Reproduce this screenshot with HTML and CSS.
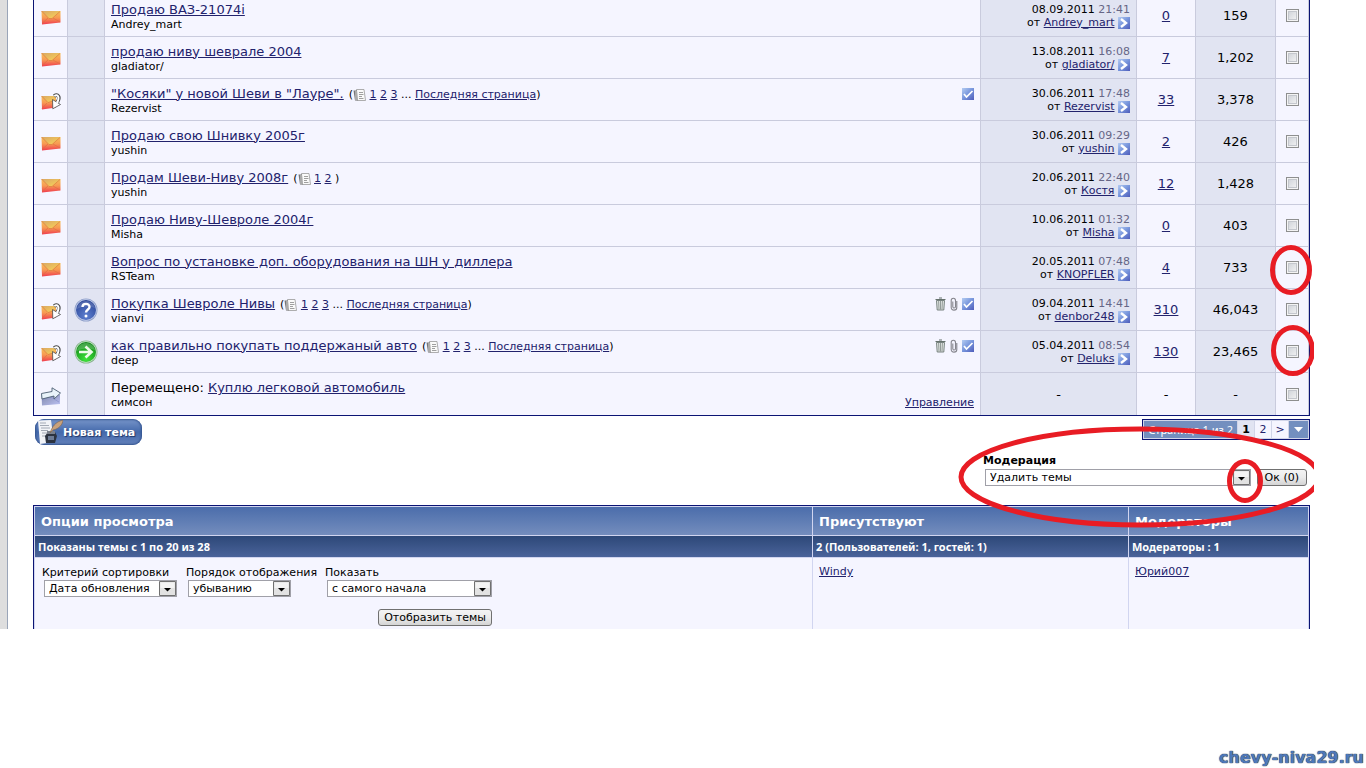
FILE: index.html
```html
<!DOCTYPE html>
<html lang="ru">
<head>
<meta charset="utf-8">
<title>Продажа и покупка - форум</title>
<link rel="stylesheet" href="styles.css">
</head>
<body>
<svg class="defs" aria-hidden="true">
  <defs>
    <linearGradient id="gMail" x1="0" y1="0" x2="0" y2="1"><stop offset="0" stop-color="#f6c25a"/><stop offset=".5" stop-color="#f79a52"/><stop offset="1" stop-color="#f03c50"/></linearGradient>
    <linearGradient id="gFlap" x1="0" y1="0" x2="1" y2="1"><stop offset="0" stop-color="#d9a765"/><stop offset="1" stop-color="#fbd557"/></linearGradient>
    <linearGradient id="gBlue" x1="0" y1="0" x2="1" y2="1"><stop offset="0" stop-color="#b4ccf2"/><stop offset=".5" stop-color="#7795dc"/><stop offset="1" stop-color="#4e5cba"/></linearGradient>
    <radialGradient id="gAsk" cx=".5" cy=".8" r=".8"><stop offset="0" stop-color="#5c7fd0"/><stop offset="1" stop-color="#2b4596"/></radialGradient>
    <radialGradient id="gGo" cx=".5" cy=".85" r=".8"><stop offset="0" stop-color="#3ee43a"/><stop offset="1" stop-color="#128a1a"/></radialGradient>
    <linearGradient id="gMove" x1="0" y1="0" x2="1" y2="1"><stop offset="0" stop-color="#7f86a8"/><stop offset="1" stop-color="#bcc2f4"/></linearGradient>
  </defs>
  <symbol id="mail" viewBox="0 0 20 15">
    <path d="M.5 1 19.500 1V12.500L1 14.500z" fill="url(#gMail)"/>
    <path d="M.5 1 19.500 1 11 8.500 8 8.500z" fill="url(#gFlap)"/>
    <path d="M.5 1 8 8.500 11 8.500 19 1.500M1 13.500 7 8M19 12 12 8" fill="none" stroke="#d8703c" stroke-width=".6"/>
  </symbol>
  <symbol id="mailhot" viewBox="0 0 20 17">
    <path d="M.5 3 15 3V14.500L1 16.500z" fill="url(#gMail)"/>
    <path d="M.5 3 15 3 12 8 7 9.500z" fill="url(#gFlap)"/>
    <path d="M.5 3 7 9.500 12 8M1 15.500 6 10" fill="none" stroke="#d8703c" stroke-width=".6"/>
    <path d="M13 3C17 .5 19.500 4 16.500 9" fill="none" stroke="#4a4a4a" stroke-width="3.600"/>
    <path d="M11.500 6.500 19.500 11.500 11.800 15.800z" fill="#fff" stroke="#4a4a4a" stroke-width=".8"/>
    <path d="M13.300 3C17 .8 19 4 16 10" fill="none" stroke="#fff" stroke-width="2"/>
  </symbol>
  <symbol id="moved" viewBox="0 0 20 19">
    <path d="M.5 7 19 7.500V17L1 18.500z" fill="url(#gMove)"/>
    <path d="M1 14 8 9l10 6" fill="none" stroke="#8d94cc" stroke-width=".8"/>
    <path d="M.5 6.500 11 4.500V.8L19.500 6 13 12V9L1 12z" fill="#e9f3fa" stroke="#4b5c70" stroke-width=".9"/>
  </symbol>
  <symbol id="ask" viewBox="0 0 24 24">
    <circle cx="12" cy="12" r="11.500" fill="#8f9fc9"/><circle cx="12" cy="12" r="10.700" fill="#c2cdea"/><circle cx="12" cy="12" r="10" fill="url(#gAsk)"/>
    <path d="M3 11C4 5 8 3 12 3s8 2 9 7C15 8 9 8 3 11z" fill="#fff" opacity=".15"/>
    <path d="M8.500 9C8.500 5 15.500 4.800 15.500 9 15.500 11.500 12 11.500 12 14.500" fill="none" stroke="#fff" stroke-width="2.400"/><circle cx="12" cy="18" r="1.500" fill="#fff"/>
  </symbol>
  <symbol id="go" viewBox="0 0 24 24">
    <circle cx="12" cy="12" r="11.500" fill="#87b58d"/><circle cx="12" cy="12" r="10.700" fill="#c4e3c6"/><circle cx="12" cy="12" r="10" fill="url(#gGo)"/>
    <path d="M3 11C4 5 8 3 12 3s8 2 9 7C15 8 9 8 3 11z" fill="#fff" opacity=".2"/>
    <path d="M5 12H17M11.500 6.500 17.500 12 11.500 17.500" fill="none" stroke="#eefbe9" stroke-width="2.600"/>
  </symbol>
  <symbol id="pages" viewBox="0 0 13 12">
    <path d="M3.500.5H11L12.500 11.500H4z" fill="#fafafa" stroke="#999" stroke-width=".8"/>
    <path d="M.5 1.500H4L4.500 11.500H2z" fill="#777"/><path d="M3 2V11" stroke="#ddd"/>
    <path d="M6 3.500H10M6 5.500H10.500M6 7.500H9M6 9.500H10.500" stroke="#888" stroke-width=".8"/>
  </symbol>
  <symbol id="last" viewBox="0 0 12 12">
    <path d="M0 0H12V12H0z" fill="url(#gBlue)"/><path d="M3 2 8 6 3 10" fill="none" stroke="#fff" stroke-width="2.400"/>
  </symbol>
  <symbol id="tick" viewBox="0 0 12 12">
    <path d="M0 0H12V12H0z" fill="url(#gBlue)"/><path d="M2 6 4.500 9 10.500 3" fill="none" stroke="#fff" stroke-width="1.700"/>
  </symbol>
  <symbol id="clip" viewBox="0 0 8 14">
    <path d="M6.800 4V10.500C6.800 14 1.200 14 1.200 10.500V3.500C1.200.5 5.500.5 5.500 3.500V9.500C5.500 11.500 2.800 11.500 2.800 9.500V4.500" fill="none" stroke="#85858d" stroke-width="1.100"/>
  </symbol>
  <symbol id="bin" viewBox="0 0 11 14">
    <path d="M1.500 3.500H9.500L8.800 13H2.200z" fill="#e2e6e4" stroke="#6b7773" stroke-width=".9"/>
    <path d="M.5 2.500H10.500M4 1H7" stroke="#65716c"/><path d="M3.600 4 4 12.500M5.500 4V12.500M7.400 4 7 12.500" stroke="#7d8884" stroke-width=".8" fill="none"/>
  </symbol>
  <symbol id="drop" viewBox="0 0 17 15">
    <path d="M.5.5H16.500V14.500H.5z" fill="#e2e2e2" stroke="#707070"/><path d="M1.500 1.500H15.500V7H1.500z" fill="#f3f3f3"/><path d="M5 7H12L8.500 10.500z" fill="#000"/>
  </symbol>
</svg>

<div class="shot">
  <main class="page">
    <table class="threads">
      <colgroup><col class="c-status"><col class="c-icon"><col><col class="c-last"><col class="c-replies"><col class="c-views"><col class="c-check"></colgroup>
      <tbody>
      <tr>
        <td><svg class="i-mail"><use href="#mail"/></svg></td><td class="alt"></td>
        <td class="topic"><div class="title"><a href="#">Продаю ВАЗ-21074i</a></div><div class="author">Andrey_mart</div></td>
        <td class="alt last">08.09.2011 <time>21:41</time><br>от <a href="#">Andrey_mart</a> <svg class="i-last"><use href="#last"/></svg></td>
        <td><a href="#">0</a></td><td class="alt">159</td><td><input type="checkbox" aria-label="Выбрать тему Продаю ВАЗ-21074i"></td>
      </tr>
      <tr>
        <td><svg class="i-mail"><use href="#mail"/></svg></td><td class="alt"></td>
        <td class="topic"><div class="title"><a href="#">продаю ниву шеврале 2004</a></div><div class="author">gladiator/</div></td>
        <td class="alt last">13.08.2011 <time>16:08</time><br>от <a href="#">gladiator/</a> <svg class="i-last"><use href="#last"/></svg></td>
        <td><a href="#">7</a></td><td class="alt">1,202</td><td><input type="checkbox" aria-label="Выбрать тему продаю ниву шеврале 2004"></td>
      </tr>
      <tr>
        <td><svg class="i-hot"><use href="#mailhot"/></svg></td><td class="alt"></td>
        <td class="topic"><div class="title"><a href="#">"Косяки" у новой Шеви в "Лауре".</a><span class="pages">(<svg class="i-pages"><use href="#pages"/></svg> <a href="#">1</a> <a href="#">2</a> <a href="#">3</a> ... <a href="#">Последняя страница</a>)</span><span class="marks"><svg class="i-last"><use href="#tick"/></svg></span></div><div class="author">Rezervist</div></td>
        <td class="alt last">30.06.2011 <time>17:48</time><br>от <a href="#">Rezervist</a> <svg class="i-last"><use href="#last"/></svg></td>
        <td><a href="#">33</a></td><td class="alt">3,378</td><td><input type="checkbox" aria-label="Выбрать тему Косяки у новой Шеви"></td>
      </tr>
      <tr>
        <td><svg class="i-mail"><use href="#mail"/></svg></td><td class="alt"></td>
        <td class="topic"><div class="title"><a href="#">Продаю свою Шнивку 2005г</a></div><div class="author">yushin</div></td>
        <td class="alt last">30.06.2011 <time>09:29</time><br>от <a href="#">yushin</a> <svg class="i-last"><use href="#last"/></svg></td>
        <td><a href="#">2</a></td><td class="alt">426</td><td><input type="checkbox" aria-label="Выбрать тему Продаю свою Шнивку 2005г"></td>
      </tr>
      <tr>
        <td><svg class="i-mail"><use href="#mail"/></svg></td><td class="alt"></td>
        <td class="topic"><div class="title"><a href="#">Продам Шеви-Ниву 2008г</a><span class="pages">(<svg class="i-pages"><use href="#pages"/></svg> <a href="#">1</a> <a href="#">2</a> )</span></div><div class="author">yushin</div></td>
        <td class="alt last">20.06.2011 <time>22:40</time><br>от <a href="#">Костя</a> <svg class="i-last"><use href="#last"/></svg></td>
        <td><a href="#">12</a></td><td class="alt">1,428</td><td><input type="checkbox" aria-label="Выбрать тему Продам Шеви-Ниву 2008г"></td>
      </tr>
      <tr>
        <td><svg class="i-mail"><use href="#mail"/></svg></td><td class="alt"></td>
        <td class="topic"><div class="title"><a href="#">Продаю Ниву-Шевроле 2004г</a></div><div class="author">Misha</div></td>
        <td class="alt last">10.06.2011 <time>01:32</time><br>от <a href="#">Misha</a> <svg class="i-last"><use href="#last"/></svg></td>
        <td><a href="#">0</a></td><td class="alt">403</td><td><input type="checkbox" aria-label="Выбрать тему Продаю Ниву-Шевроле 2004г"></td>
      </tr>
      <tr>
        <td><svg class="i-mail"><use href="#mail"/></svg></td><td class="alt"></td>
        <td class="topic"><div class="title"><a href="#">Вопрос по установке доп. оборудования на ШН у диллера</a></div><div class="author">RSTeam</div></td>
        <td class="alt last">20.05.2011 <time>07:48</time><br>от <a href="#">KNOPFLER</a> <svg class="i-last"><use href="#last"/></svg></td>
        <td><a href="#">4</a></td><td class="alt">733</td><td><input type="checkbox" aria-label="Выбрать тему Вопрос по установке"></td>
      </tr>
      <tr>
        <td><svg class="i-hot"><use href="#mailhot"/></svg></td><td class="alt"><svg class="i-round"><use href="#ask"/></svg></td>
        <td class="topic"><div class="title"><a href="#">Покупка Шевроле Нивы</a><span class="pages">(<svg class="i-pages"><use href="#pages"/></svg> <a href="#">1</a> <a href="#">2</a> <a href="#">3</a> ... <a href="#">Последняя страница</a>)</span><span class="marks"><svg class="i-bin"><use href="#bin"/></svg><svg class="i-clip"><use href="#clip"/></svg><svg class="i-last"><use href="#tick"/></svg></span></div><div class="author">vianvi</div></td>
        <td class="alt last">09.04.2011 <time>14:41</time><br>от <a href="#">denbor248</a> <svg class="i-last"><use href="#last"/></svg></td>
        <td><a href="#">310</a></td><td class="alt">46,043</td><td><input type="checkbox" aria-label="Выбрать тему Покупка Шевроле Нивы"></td>
      </tr>
      <tr>
        <td><svg class="i-hot"><use href="#mailhot"/></svg></td><td class="alt"><svg class="i-round"><use href="#go"/></svg></td>
        <td class="topic"><div class="title"><a href="#">как правильно покупать поддержаный авто</a><span class="pages">(<svg class="i-pages"><use href="#pages"/></svg> <a href="#">1</a> <a href="#">2</a> <a href="#">3</a> ... <a href="#">Последняя страница</a>)</span><span class="marks"><svg class="i-bin"><use href="#bin"/></svg><svg class="i-clip"><use href="#clip"/></svg><svg class="i-last"><use href="#tick"/></svg></span></div><div class="author">deep</div></td>
        <td class="alt last">05.04.2011 <time>08:54</time><br>от <a href="#">Deluks</a> <svg class="i-last"><use href="#last"/></svg></td>
        <td><a href="#">130</a></td><td class="alt">23,465</td><td><input type="checkbox" aria-label="Выбрать тему как правильно покупать"></td>
      </tr>
      <tr>
        <td><svg class="i-moved"><use href="#moved"/></svg></td><td class="alt"></td>
        <td class="topic"><div class="title"><span>Перемещено:</span><a class="after" href="#">Куплю легковой автомобиль</a></div><div class="author"><span>симсон</span><a href="#">Управление</a></div></td>
        <td class="alt">-</td><td>-</td><td class="alt">-</td><td><input type="checkbox" aria-label="Выбрать перемещённую тему"></td>
      </tr>
      </tbody>
    </table>

    <div class="below">
      <a class="newtopic" href="#">
        <svg class="quill" viewBox="0 0 28 26" aria-hidden="true">
          <path d="M3 1.500 16 1 19 23 5 25z" fill="#f1f3f7"/>
          <path d="M5 4H11M5 6.500H14M6 9H15M6 11.500H13M7 14H12M7 17H11" stroke="#9aa1ad" stroke-width=".9"/>
          <path d="M10 17 13 13H20L22 17 20 24H11z" fill="#2c3340"/><path d="M13 17H19V21H13z" fill="#6d7b94"/><path d="M12 12H20V15H12z" fill="#7a808c"/>
          <path d="M15 14C17 8 20 3 28 1 28 5 24 10 18 11z" fill="#c9a27c" stroke="#7c6450" stroke-width=".6"/>
        </svg>
        <span>Новая тема</span>
      </a>
      <nav class="pager">
        <span class="count">Страница 1 из 2</span><b>1</b><a href="#">2</a><a href="#">&gt;</a>
        <button type="button" aria-label="Перейти к странице"><svg viewBox="0 0 9 6"><path d="M0 0H9L4.500 5z" fill="#fff"/></svg></button>
      </nav>
    </div>

    <form class="moderation">
      <label for="act">Модерация</label>
      <div class="line">
        <span class="pick wide"><select id="act"><option>Удалить темы</option></select><svg viewBox="0 0 17 15"><use href="#drop"/></svg></span>
        <button type="button" class="btn ok">Ок (0)</button>
      </div>
    </form>

    <table class="options">
      <colgroup><col><col class="o-present"><col class="o-mods"></colgroup>
      <thead>
        <tr><th>Опции просмотра</th><th>Присутствуют</th><th>Модераторы</th></tr>
        <tr class="sub"><th>Показаны темы с 1 по 20 из 28</th><th>2 (Пользователей: 1, гостей: 1)</th><th>Модераторы : 1</th></tr>
      </thead>
      <tbody><tr>
        <td>
          <form class="sort">
            <div class="fields">
              <div class="f-by"><label for="by">Критерий сортировки</label><span class="pick"><select id="by"><option>Дата обновления</option></select><svg viewBox="0 0 17 15"><use href="#drop"/></svg></span></div>
              <div class="f-order"><label for="ord">Порядок отображения</label><span class="pick"><select id="ord"><option>убыванию</option></select><svg viewBox="0 0 17 15"><use href="#drop"/></svg></span></div>
              <div class="f-from"><label for="from">Показать</label><span class="pick"><select id="from"><option>с самого начала</option></select><svg viewBox="0 0 17 15"><use href="#drop"/></svg></span></div>
            </div>
            <button type="button" class="btn">Отобразить темы</button>
          </form>
        </td>
        <td><a href="#">Windy</a></td>
        <td><a href="#">Юрий007</a></td>
      </tr></tbody>
    </table>
  </main>
  <svg class="rings" viewBox="954 0 360 630" aria-hidden="true">
    <g fill="none" stroke="#e81c24" stroke-width="5">
      <ellipse cx="1291" cy="270" rx="18.500" ry="22.500"/>
      <ellipse cx="1293" cy="350.500" rx="19.500" ry="23"/>
      <ellipse cx="1245" cy="481" rx="15.500" ry="19.500"/>
      <ellipse cx="1140" cy="477" rx="179" ry="48"/>
    </g>
  </svg>
</div>
<footer class="site">chevy-niva29.ru</footer>
</body>
</html>
```
FILE: styles.css
```css
* { box-sizing: border-box; }

body {
  margin: 0;
  min-height: 100vh;
  display: flex;
  flex-direction: column;
  background: #fff;
  color: #000;
  font: 11px/13px "DejaVu Sans", Verdana, sans-serif;
}

a { color: #22226c; }
svg { display: inline-block; vertical-align: middle; }
.defs { position: absolute; width: 0; height: 0; }

.shot {
  position: relative;
  overflow: hidden;
  margin-right: 52px;
  border-left: 7px solid #dedede;
}
.page {
  border-left: 1px solid #9aa5b8;
  padding: 0 4px 0 25px;
}
.rings {
  position: absolute;
  top: 0;
  right: 0;
  width: 360px;
  height: 630px;
  pointer-events: none;
}

/* thread list */
.threads {
  width: 100%;
  margin-top: -6px;
  table-layout: fixed;
  border-collapse: separate;
  border-spacing: 0;
  border: 1px solid #0b1474;
}
.c-status { width: 34px; }
.c-icon { width: 37px; }
.c-last { width: 156px; }
.c-replies { width: 59px; }
.c-views { width: 80px; }
.c-check { width: 33px; }

.threads td {
  height: 42px;
  padding: 0 6px;
  background: #f5f5ff;
  border-right: 1px solid #c9cbdd;
  border-bottom: 1px solid #c9cbdd;
  text-align: center;
  font-size: 13px;
}
.threads tr:last-child td { border-bottom: 0; }
.threads .alt { background: #e1e4f2; }
.threads .topic { padding-top: 2px; text-align: left; }
.threads td:nth-child(2), .threads td:last-child { padding: 0; }
.threads td:first-child { padding: 4px 0 0; }
.threads .last { text-align: right; font-size: 11px; }
.last time { color: #666686; }

.title { display: flex; line-height: 16px; }
.after { margin-left: 4px; }
.pages { margin-left: 5px; font-size: 11px; line-height: 17px; height: 16px; }
.author { display: flex; justify-content: space-between; font-size: 11px; line-height: 14px; }
.marks { display: flex; align-items: center; gap: 4px; margin-left: auto; }

.i-mail { width: 20px; height: 15px; }
.i-hot { width: 20px; height: 17px; }
.i-moved { width: 20px; height: 19px; }
.i-round { width: 24px; height: 24px; }
.i-pages { width: 13px; height: 12px; }
.i-last { width: 12px; height: 12px; }
.i-clip { width: 8px; height: 14px; }
.i-bin { width: 11px; height: 14px; }

input[type="checkbox"] {
  appearance: none;
  display: block;
  width: 13px;
  height: 13px;
  margin: 0 auto;
  border: 1px solid #8e8f8f;
  background: linear-gradient(135deg, #cbcfd5, #f6f6f6);
  box-shadow: inset 0 0 0 1px #f4f4f4, inset 0 0 0 2px #c4c7cd;
}

/* button and pager under the list */
.below {
  display: flex;
  justify-content: space-between;
  align-items: flex-start;
  padding: 3px 0 0 2px;
}
.newtopic {
  display: flex;
  align-items: center;
  width: 107px;
  height: 26px;
  border-radius: 9px;
  background: linear-gradient(#7896ca, #4469ab 50%, #6482bb);
  box-shadow: inset 0 0 2px 1px #34548f;
  color: #fff;
  font: bold 11px/13px "DejaVu Sans", Verdana, sans-serif;
  text-decoration: none;
  text-shadow: 1px 1px 1px #1f3566;
  white-space: nowrap;
}
.quill { flex: none; width: 28px; height: 26px; }

.pager {
  display: flex;
  gap: 1px;
  padding: 1px;
  border: 1px solid #0b1474;
  background: #d1d5e8;
  font-size: 11px;
  line-height: 18px;
}
.pager > * {
  height: 17px;
  min-width: 16px;
  background: #f5f5ff;
  text-align: center;
  text-decoration: none;
}
.pager .count {
  padding: 0 4px;
  background: #738fbf;
  color: #fff;
  font-family: "Noto Sans", Tahoma, sans-serif;
}
.pager b { background: #e1e4f2; }
.pager button {
  display: grid;
  place-items: center;
  width: 19px;
  padding: 0;
  border: 0;
  background: #738fbf;
}
.pager button svg { width: 9px; height: 6px; }

/* moderation */
.moderation {
  width: 327px;
  margin: 8px 0 19px auto;
}
.moderation label { display: block; line-height: 15px; font-weight: bold; }
.line { display: flex; justify-content: space-between; padding: 1px 3px 0 2px; }

.pick { position: relative; display: block; }
.pick.wide { width: 266px; }
.pick select {
  appearance: none;
  display: block;
  width: 100%;
  height: 17px;
  padding: 0 18px 0 4px;
  border: 1px solid #a0a0a8;
  border-radius: 0;
  background: #fff;
  color: #000;
  font: 11px/15px "DejaVu Sans", Verdana, sans-serif;
}
.pick svg { position: absolute; top: 1px; right: 1px; width: 17px; height: 15px; pointer-events: none; }

.btn {
  height: 17px;
  padding: 0 5px;
  border: 1px solid #707070;
  border-radius: 3px;
  background: linear-gradient(#f4f4f4, #ebebeb 50%, #d4d4d4);
  color: #000;
  font: 11px/13px "DejaVu Sans", Verdana, sans-serif;
  white-space: nowrap;
}
.btn.ok { padding: 0 7px; }

/* view options */
.options {
  width: 100%;
  margin-bottom: -1px;
  table-layout: fixed;
  border-collapse: separate;
  border-spacing: 1px;
  border: 1px solid #0b1474;
  border-bottom: 0;
  background: #d1d5f0;
}
.o-present { width: 315px; }
.o-mods { width: 179px; }
.options th {
  height: 28px;
  padding: 0 6px;
  background: linear-gradient(#4b6dab, #748dbd);
  color: #fff;
  font-size: 13px;
  text-align: left;
}
.options .sub th {
  height: 21px;
  padding: 0 3px;
  background: linear-gradient(#2d4878, #4a639a);
  font-family: "Noto Sans", Tahoma, sans-serif;
  font-size: 11px;
}
.options td { padding: 7px 6px 3px; background: #f5f5ff; vertical-align: top; }

.sort { padding: 0 0 0 1px; width: 451px; }
.fields { display: flex; }
.fields label { display: block; line-height: 15px; white-space: nowrap; }
.f-by { width: 135px; margin-right: 9px; }
.f-order { width: 132px; margin-right: 7px; }
.f-from { width: 167px; }
.fields .pick { margin-left: 2px; }
.f-order .pick { width: 103px; }
.sort .btn { display: block; margin: 12px 0 0 auto; }

.site {
  margin-top: auto;
  padding: 0 2px 1px 0;
  color: #4f78b8;
  font: bold 16px/19px "DejaVu Sans", Verdana, sans-serif;
  text-align: right;
  text-shadow: 0 0 1px #1d2b40, 0 0 1px #1d2b40;
}
```
